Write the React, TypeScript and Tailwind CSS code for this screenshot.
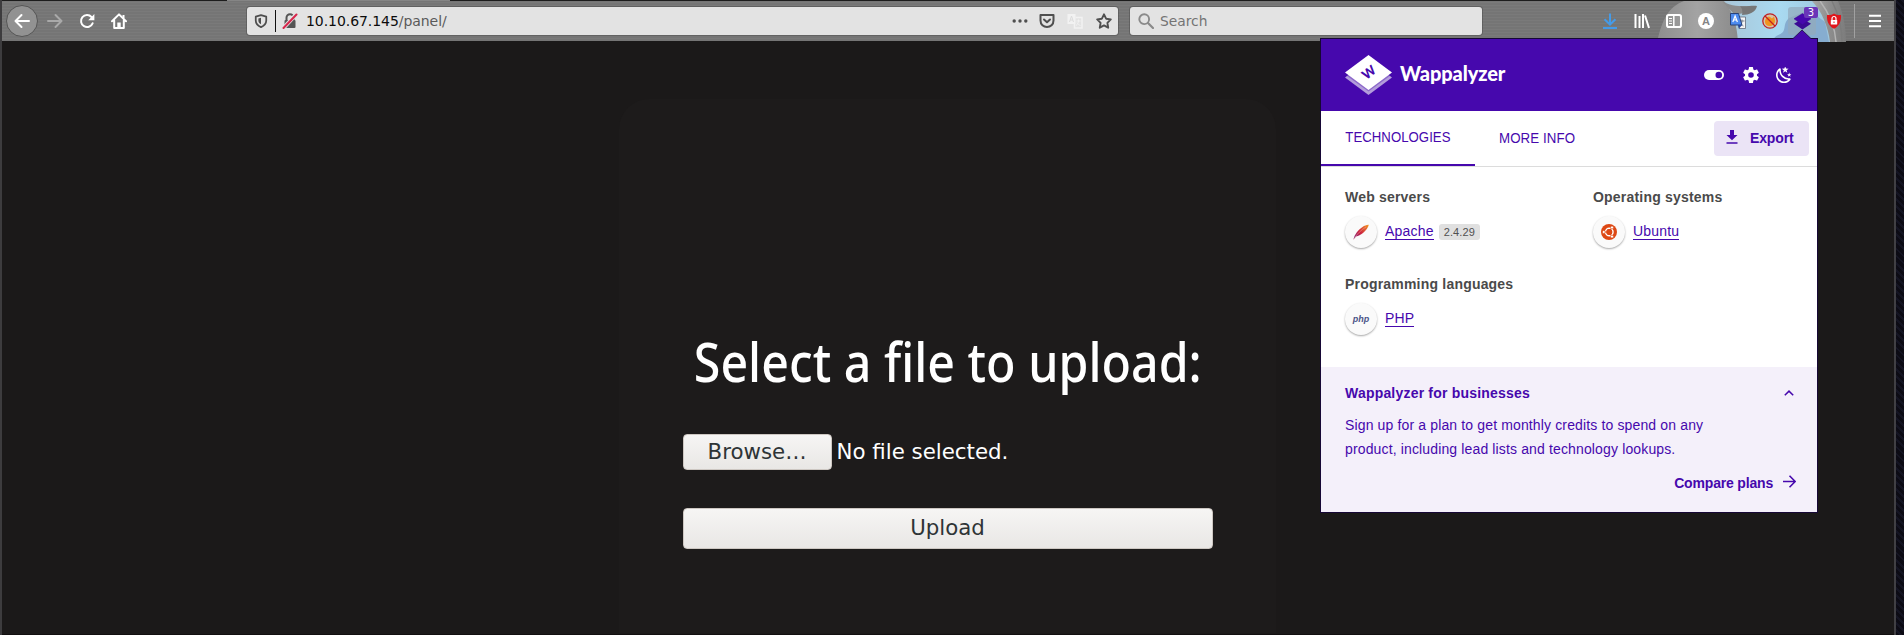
import type { ReactNode } from "react";

type IconProps = { children: ReactNode; className?: string; box?: string };

function Icon({ children, className = "size-4", box = "0 0 16 16" }: IconProps) {
  return (
    <svg viewBox={box} className={`shrink-0 ${className}`} fill="none">
      {children}
    </svg>
  );
}

function Slot({ children, className }: { children: ReactNode; className: string }) {
  return <div className={`flex h-full shrink-0 items-center justify-center ${className}`}>{children}</div>;
}

function NavButtons() {
  return (
    <div className="flex h-full w-[245px] shrink-0 items-center pl-[4px]">
      <div className="flex size-8 items-center justify-center rounded-full border border-[#555] bg-[#929292]">
        <Icon className="size-4">
          <path d="M15 8H2M7.5 2 1.5 8l6 6" stroke="#fff" strokeWidth="2" strokeLinecap="round" strokeLinejoin="round" />
        </Icon>
      </div>
      <Slot className="w-[33px]">
        <Icon>
          <path d="M1 8h13M8.5 2l6 6-6 6" stroke="#a9a9a9" strokeWidth="2" strokeLinecap="round" strokeLinejoin="round" />
        </Icon>
      </Slot>
      <Slot className="w-[32px]">
        <Icon>
          <path d="M13.6 10.3A6 6 0 1 1 12.5 4" stroke="#fff" strokeWidth="2" strokeLinecap="round" />
          <path d="M15.4 1v6.2H9.2z" fill="#fff" />
        </Icon>
      </Slot>
      <Slot className="w-[31px]">
        <Icon>
          <path d="M1 8.2 8 1.4l7 6.8M3.2 7.5V15h9.6V7.5" stroke="#fff" strokeWidth="2" strokeLinecap="round" strokeLinejoin="round" />
          <path d="M6.3 15V9.6h3.4V15zM11.5 2h2v3.2h-2z" fill="#fff" />
        </Icon>
      </Slot>
    </div>
  );
}

function AddressBar() {
  return (
    <div className="flex h-[28px] w-[871px] shrink-0 items-center rounded-[3px] bg-[#e3e3e3] shadow-[0_0_0_1px_rgba(70,70,70,0.45)]">
      <Slot className="w-[28px]">
        <Icon className="size-[14px]">
          <path d="M8 1.2 14 3v4.5c0 3.8-2.4 6-6 7.5-3.6-1.500-6-3.700-6-7.500V3z" stroke="#4e4e4e" strokeWidth="2" strokeLinejoin="round" />
          <path d="M8 4.2v7.6c-2-1-3-2.300-3-4.300V5z" fill="#4e4e4e" />
        </Icon>
      </Slot>
      <div className="h-[22px] w-px bg-[#111]" />
      <Slot className="w-[28px]">
        <Icon className="size-[16px]">
          <path d="M4.500 8V4.800a3.500 3.500 0 0 1 7 0V8" stroke="#555" strokeWidth="2" />
          <rect x="2.500" y="7" width="11" height="8" rx="1" fill="#555" />
          <path d="M1 15.500 14.500 1" stroke="#e3e3e3" strokeWidth="4" />
          <path d="M1.500 15 14.500 1.500" stroke="#d7264c" strokeWidth="2" strokeLinecap="round" />
        </Icon>
      </Slot>
      <div className="grow pl-[2px] font-['DejaVu_Sans',sans-serif] text-[14px] leading-none tracking-[-0.06px] text-[#5a5a5a]">
        <span className="text-[#0c0c0c]">10.10.67.145</span>/panel/
      </div>
      <Slot className="w-[27px]">
        <Icon>
          <circle cx="2.200" cy="8" r="1.700" fill="#4f4f4f" />
          <circle cx="8" cy="8" r="1.700" fill="#4f4f4f" />
          <circle cx="13.800" cy="8" r="1.700" fill="#4f4f4f" />
        </Icon>
      </Slot>
      <Slot className="w-[28px]">
        <Icon>
          <path d="M1.500 2h13v5.500c0 4-3 6.500-6.500 6.500s-6.500-2.500-6.500-6.500z" stroke="#4f4f4f" strokeWidth="2" strokeLinejoin="round" />
          <path d="M5 6.500 8 9.300l3-2.800" stroke="#4f4f4f" strokeWidth="2" strokeLinecap="round" strokeLinejoin="round" />
        </Icon>
      </Slot>
      <Slot className="w-[28px]">
        <Icon>
          <path d="M0.500 1h8v10h-8z" fill="#f2f2f2" />
          <path d="M8.500 4.500H15V15H7.500v-4" stroke="#f2f2f2" strokeWidth="1.500" />
          <path d="M9.500 8h4M11.500 6.500V8c0 2-1 3.500-2.500 4.500M10 9.500c.500 1.500 2 2.500 3.500 3" stroke="#f2f2f2" />
          <path d="m2.500 9 2-6 2 6M3.200 7h2.600" stroke="#dcdcdc" />
        </Icon>
      </Slot>
      <Slot className="w-[29px]">
        <Icon>
          <path d="m8 1.300 2.100 4.400 4.700.700-3.400 3.400.800 4.900L8 12.400l-4.200 2.300.800-4.900L1.200 6.400l4.700-.700z" stroke="#4f4f4f" strokeWidth="1.900" strokeLinejoin="round" />
        </Icon>
      </Slot>
    </div>
  );
}

function SearchBar() {
  return (
    <div className="ml-[12px] flex h-[28px] w-[352px] shrink-0 items-center gap-[6px] rounded-[3px] bg-[#e3e3e3] pl-[8px] shadow-[0_0_0_1px_rgba(70,70,70,0.45)]">
      <Icon>
        <circle cx="6.200" cy="6.200" r="4.900" stroke="#8a8a8a" strokeWidth="1.900" />
        <path d="m10 10 5 5" stroke="#8a8a8a" strokeWidth="2.200" strokeLinecap="round" />
      </Icon>
      <span className="pt-px font-['DejaVu_Sans',sans-serif] text-[13.8px] leading-none text-[#747474]">Search</span>
    </div>
  );
}

/* Artwork of the browser theme that shows behind the toolbar buttons. */
function ThemeArt() {
  return (
    <svg viewBox="0 0 210 42" className="absolute top-0 left-[1652px] h-[42px] w-[210px]">
      <defs>
        <linearGradient id="sky" x1="0" x2="1">
          <stop offset="0" stopColor="#a9c6d8" />
          <stop offset="0.5" stopColor="#a9daf1" />
          <stop offset="1" stopColor="#9cc4da" />
        </linearGradient>
        <linearGradient id="hairLeft" x1="0" x2="1">
          <stop offset="0" stopColor="#8e8e8e" />
          <stop offset="0.5" stopColor="#a3a3a3" />
          <stop offset="1" stopColor="#8a8a8a" />
        </linearGradient>
        <linearGradient id="hairRight" x1="0" x2="1">
          <stop offset="0" stopColor="#a8a8a8" />
          <stop offset="0.5" stopColor="#8e8e8e" />
          <stop offset="1" stopColor="#7c7c7c" />
        </linearGradient>
      </defs>
      <path d="M70 1h112v41H70z" fill="url(#sky)" />
      <path d="M3 42C8 20 14 7 30 1h40c10 12 13 26 14 41z" fill="url(#hairLeft)" />
      <path d="M68 1c8 5 20 6 30 5-2 5-10 9-18 8z" fill="#8c8c8c" />
      <path d="M86 6c6 1 13-1 17 0-1 6-8 9-15 9 1-4 0-7-2-9z" fill="#777" />
      <path d="M118 42c3-8 7-6 11-10 3-5 0-8 6-14l20-8 16 12 4 20z" fill="#86add0" />
      <path d="M158 1h26c6 14 8 28 8 41h-16c-2-16-8-30-18-41z" fill="url(#hairRight)" />
      <path d="M166 1c9 12 15 26 16 41" stroke="#b4b4b4" strokeWidth="1.500" fill="none" />
      <path d="M178 1c6 12 10 26 10 41" stroke="#7c7c7c" strokeWidth="1.500" fill="none" />
    </svg>
  );
}

function ToolbarIcons() {
  return (
    <div className="relative ml-[112px] flex h-full items-center">
      <Slot className="w-[32px]">
        <Icon>
          <path d="M8 0.500V11M2.500 6.200 8 11.500l5.500-5.300M1 15h14" stroke="#459be8" strokeWidth="2" />
        </Icon>
      </Slot>
      <Slot className="w-[32px]">
        <Icon>
          <path d="M1.500 1v14M5.500 3v12M9 1v14M11 2.500 15 15" stroke="#fff" strokeWidth="2" />
        </Icon>
      </Slot>
      <Slot className="w-[32px]">
        <Icon>
          <rect x="1" y="2" width="14" height="12" rx="1.800" stroke="#fff" strokeWidth="2" />
          <path d="M7.800 2v12" stroke="#fff" strokeWidth="1.500" />
          <path d="M3 5.500h3M3 8h3M3 10.500h3" stroke="#fff" />
        </Icon>
      </Slot>
      <Slot className="w-[32px]">
        <div className="flex size-4 items-center justify-center rounded-full bg-white font-['Liberation_Sans',sans-serif] text-[11px] leading-none font-bold text-[#858585]">
          A
        </div>
      </Slot>
      <Slot className="w-[32px]">
        <Icon>
          <path d="M7 4h8.500v11.500H9z" fill="#f4f4f4" stroke="#626b7a" strokeWidth="0.800" />
          <path d="M9.500 8h5M12 6.500V8c0 2-1 4-3 5M10 9.500c.500 2 2 3 3.500 3.500" stroke="#6e7785" strokeWidth="0.900" />
          <path d="M0.500 0.500h8L12 12H0.500z" fill="#4c8bf0" stroke="#1f3a72" strokeWidth="0.900" />
          <path d="m2.800 9 2.300-6 2.300 6M3.600 7h3" stroke="#fff" strokeWidth="1.200" />
          <path d="M8 12h4l-3 3.500z" fill="#2349a0" />
        </Icon>
      </Slot>
      <Slot className="w-[32px]">
        <Icon>
          <circle cx="8" cy="8" r="6.500" fill="#d7c2a5" />
          <path d="M3 9c0-3 2-6 5-5l2 1.500 2-2 .800 3c.800 4-1.800 6.500-5 6.500S3 11 3 9z" fill="#f0941f" />
          <circle cx="8" cy="8" r="7.200" stroke="#c41f1f" strokeWidth="1.300" />
          <path d="m3 3 10 10" stroke="#c41f1f" strokeWidth="1.300" />
        </Icon>
      </Slot>
      <Slot className="w-[32px]">
        <div className="relative flex size-7 items-center justify-center rounded-[3px] bg-[#93a9ba]/70">
          <Icon className="size-[17px]">
            <path d="m8 5.500 8 4.700-8 5.300-8-5.300z" fill="#3a0a94" />
            <path d="m8 0.500 8 5-8 5.500-8-5.500z" fill="#4608ad" stroke="#3a0a94" strokeWidth="0.500" />
          </Icon>
          <div className="absolute top-0 -right-[2px] flex h-[11px] w-[14px] items-center justify-center rounded-[2px] bg-[#6a35b8] font-['DejaVu_Sans',sans-serif] text-[10px] leading-none text-white">
            3
          </div>
        </div>
      </Slot>
      <Slot className="w-[32px]">
        <Icon>
          <path d="M8 0.500c2 1.300 4.500 1.800 7 1.500.400 6-1.500 11-7 13.800C2.500 13 .600 8 1 2c2.500.300 5-.200 7-1.500z" fill="#e0161c" />
          <rect x="4.800" y="7" width="6.400" height="4.600" rx="0.500" fill="#fff" />
          <path d="M6 7V5.500a2 2 0 0 1 4 0V7" stroke="#fff" strokeWidth="1.200" />
          <path d="M8 8.500v1.500" stroke="#e0161c" />
        </Icon>
      </Slot>
      <div className="ml-[4px] h-[34px] w-px bg-[#a0a0a0]" />
      <Slot className="ml-[4px] w-[32px]">
        <Icon className="size-4">
          <path d="M2 2.800h12M2 8h12M2 13.200h12" stroke="#fff" strokeWidth="2" />
        </Icon>
      </Slot>
    </div>
  );
}

function Toolbar() {
  return (
    <div className="relative h-[41px] w-full bg-[#757575] bg-[repeating-linear-gradient(0deg,transparent_0_2px,rgba(255,255,255,0.04)_2px_3px)]">
      <ThemeArt />
      <div className="absolute inset-x-0 top-0 flex h-px">
        <div className="w-[225px] bg-[#1c1c1c]" />
        <div className="w-[223px] bg-[#858585]" />
        <div className="grow bg-[#1c1c1c]" />
      </div>
      <div className="relative flex h-full items-center pt-px">
        <NavButtons />
        <AddressBar />
        <SearchBar />
        <ToolbarIcons />
      </div>
    </div>
  );
}

function UploadPage() {
  return (
    <div className="flex grow justify-center bg-[#1b1919] pt-[58px] pr-[2px] pb-px">
      <div className="flex w-[657px] flex-col rounded-t-[30px] bg-[#1d1b1b] px-[64px] pt-[215px]">
        <h1 className="flex h-[94px] items-center justify-center whitespace-nowrap pl-[2px] font-['Noto_Sans',sans-serif] text-[54px] leading-none font-medium text-white">
          <span className="inline-block origin-center scale-x-[0.895]">Select a file to upload:</span>
        </h1>
        <div className="mt-[26px] flex h-[36px] items-center gap-[5px] font-['DejaVu_Sans',sans-serif] text-[21.33px]">
          <button className="h-full w-[149px] rounded-[4px] border border-[#cdc7c2] bg-linear-to-b from-[#f6f5f4] to-[#e9e7e5] leading-none text-[#2e3436]">
            Browse…
          </button>
          <span className="leading-none text-white">No file selected.</span>
        </div>
        <button className="mt-[38px] h-[41px] w-[530px] rounded-[4px] border border-[#cdc7c2] bg-linear-to-b from-[#f6f5f4] to-[#e9e7e5] pb-[2px] font-['DejaVu_Sans',sans-serif] text-[21.33px] leading-none text-[#2e3436]">
          Upload
        </button>
      </div>
    </div>
  );
}

function TechIcon({ children }: { children: ReactNode }) {
  return (
    <div className="flex size-8 items-center justify-center rounded-full bg-[#fafafa] shadow-[0_1px_2px_rgba(0,0,0,0.35)]">
      {children}
    </div>
  );
}

function Tech({ title, name, version, icon }: { title: string; name: string; version?: string; icon: ReactNode }) {
  return (
    <div className="h-[87px]">
      <div className="h-[20px] text-[14px] leading-[20px] font-bold tracking-[0.2px] whitespace-nowrap text-[#4a4a4a]">{title}</div>
      <div className="mt-[9px] flex items-center">
        <TechIcon>{icon}</TechIcon>
        <span className="mb-[2px] ml-[8px] border-b border-[#4608ad] text-[14px] leading-[16px] tracking-[0.2px] text-[#4608ad]">{name}</span>
        {version && (
          <span className="ml-[5px] flex h-[16px] items-center rounded-[3px] bg-[#e0e0e0] px-[5px] text-[11px] leading-none tracking-[0.1px] text-[#505050]">
            {version}
          </span>
        )}
      </div>
    </div>
  );
}

function WappalyzerPopup() {
  return (
    <div className="absolute top-[38px] left-[1320px] w-[498px] border border-[#160735] bg-white font-['Liberation_Sans',Arial,sans-serif]">
      <svg viewBox="0 0 20 10" className="absolute -top-[10px] left-[471px] h-[11px] w-[20px]">
        <path d="M0 10 10 0.500 20 10z" fill="#4608ad" stroke="#160735" strokeWidth="0.700" />
      </svg>
      <header className="relative flex h-[72px] items-center bg-[#4608ad] pl-[24px]">
        <div className="relative flex h-[40px] w-[47px] justify-center">
          <svg viewBox="0 0 47 40" className="absolute inset-0 h-[40px] w-[47px]">
            <path d="M0 22.500 23.500 5 47 22.500 23.500 40z" fill="#b39ddb" />
            <path d="M0 19.500 23.500 3 47 19.500 23.500 36.500z" fill="#4608ad" opacity="0.350" />
            <path d="M0 17.500 23.500 0 47 17.500 23.500 35z" fill="#fff" />
          </svg>
          <span className="relative flex h-[35px] -rotate-[38deg] items-center font-['Lato',sans-serif] text-[13px] leading-none font-black text-[#4608ad]">
            W
          </span>
        </div>
        <span className="ml-[8px] pb-[5px] font-['Lato',sans-serif] text-[20px] leading-none font-black tracking-[-0.1px] text-white">Wappalyzer</span>
        <div className="ml-auto flex items-center pr-[25px]">
          <svg viewBox="0 0 20 10" className="h-[10px] w-[20px]">
            <rect width="20" height="10" rx="5" fill="#fff" />
            <circle cx="14.800" cy="5" r="3.300" fill="#4608ad" />
          </svg>
          <svg viewBox="2 2 20 20" className="ml-[19px] size-[16px]">
            <path fill="#fff" d="M12 15.500A3.500 3.500 0 0 1 8.500 12 3.500 3.500 0 0 1 12 8.500a3.500 3.500 0 0 1 3.500 3.500 3.500 3.500 0 0 1-3.500 3.500m7.430-2.530c.040-.320.070-.640.070-.970s-.030-.660-.070-1l2.110-1.630c.190-.150.240-.420.120-.640l-2-3.460c-.120-.220-.390-.310-.610-.220l-2.490 1c-.520-.390-1.060-.730-1.690-.980l-.370-2.650A.506.506 0 0 0 14 2h-4c-.250 0-.460.180-.500.420l-.370 2.650c-.630.250-1.170.590-1.690.980l-2.490-1c-.220-.090-.490 0-.610.220l-2 3.460c-.130.220-.070.490.120.640L4.570 11c-.040.340-.070.670-.070 1s.030.650.070.970l-2.110 1.660c-.190.150-.250.420-.120.640l2 3.460c.120.220.390.300.610.220l2.490-1.010c.520.400 1.060.740 1.690.990l.370 2.650c.040.240.250.420.500.420h4c.250 0 .460-.180.500-.420l.370-2.650c.630-.260 1.170-.590 1.690-.990l2.490 1.010c.220.080.490 0 .610-.220l2-3.460c.120-.220.070-.490-.120-.640z" />
          </svg>
          <svg viewBox="2 2 20 20" className="ml-[17px] size-[16px]">
            <path fill="#fff" d="m17.750 4.090-2.530 1.940.910 3.060-2.630-1.810-2.630 1.810.910-3.060-2.530-1.940L12.440 4l1.060-3 1.060 3zm3.500 6.910-1.640 1.250.590 1.980-1.700-1.170-1.700 1.170.590-1.980L15.750 11l2.060-.050L18.500 9l.690 1.950zm-2.280 4.950c.830-.080 1.720 1.100 1.190 1.850-.320.450-.660.870-1.080 1.270C15.170 23 8.840 23 4.940 19.070c-3.910-3.900-3.910-10.240 0-14.140.400-.400.820-.760 1.270-1.080.750-.530 1.930.360 1.850 1.190-.270 2.860.690 5.830 2.890 8.020a9.960 9.960 0 0 0 8.020 2.890m-1.640 2.020a12.080 12.080 0 0 1-7.800-3.470c-2.170-2.190-3.330-5-3.490-7.820-2.810 3.140-2.700 7.960.310 10.980 3.020 3.010 7.840 3.120 10.980.310" />
          </svg>
        </div>
      </header>

      <nav className="flex h-[56px] border-b border-[#dcdcdc] text-[14px] leading-none text-[#4608ad]">
        <div className="flex w-[154px] items-center justify-center border-b-2 border-[#4608ad] pb-[2px]">
          <span className="inline-block scale-x-[0.94] tracking-[0.05px]">TECHNOLOGIES</span>
        </div>
        <div className="flex w-[124px] items-center justify-center pb-px">
          <span className="inline-block scale-x-[0.95] tracking-[0.1px]">MORE INFO</span>
        </div>
        <button className="mt-[10px] mr-[8px] ml-auto flex h-[35px] w-[95px] items-center rounded-[4px] bg-[#ebe4f6] pb-[2px] pl-[12px] text-[14px] font-bold">
          <svg viewBox="0 0 12 14" className="h-[14px] w-[12px] -translate-y-px">
            <path d="M4 0h4v5h3.500L6 10.300.500 5H4zM.500 12.300h11v1.500H.500z" fill="#4608ad" />
          </svg>
          <span className="ml-[12px] tracking-[-0.15px]">Export</span>
        </button>
      </nav>

      <section className="grid h-[200px] grid-cols-[248px_248px] content-start overflow-hidden pt-[20px] pl-[24px]">
        <Tech
          title="Web servers"
          name="Apache"
          version="2.4.29"
          icon={
            <svg viewBox="0 0 16 16" className="size-4">
              <defs>
                <linearGradient id="feather" x1="0" y1="1" x2="1" y2="0">
                  <stop offset="0" stopColor="#6d2a8c" />
                  <stop offset="0.450" stopColor="#cb2140" />
                  <stop offset="1" stopColor="#f59a22" />
                </linearGradient>
              </defs>
              <path d="M0.500 15.500C1.500 10.500 5 6 9.500 3 11.500 1.600 14 .600 15.800.800 15.300 3.500 13 6.500 10 9c-2.500 2-4.500 3-7 3.500z" fill="url(#feather)" />
              <path d="M0.500 15.500C4 10 8 6 13 3" stroke="#f4a9a0" strokeWidth="0.500" fill="none" />
            </svg>
          }
        />
        <Tech
          title="Operating systems"
          name="Ubuntu"
          icon={
            <svg viewBox="0 0 16 16" className="size-4">
              <circle cx="8" cy="8" r="8" fill="#dd4814" />
              <circle cx="8.300" cy="8" r="3.700" fill="none" stroke="#fff" strokeWidth="1.500" />
              <path d="M8 8H2M8 8l3.500-6M8 8l3.500 6" stroke="#dd4814" strokeWidth="0.900" />
              <circle cx="8.300" cy="8" r="2.900" fill="#dd4814" />
              <g fill="#fff" stroke="#dd4814" strokeWidth="0.600">
                <circle cx="2.800" cy="8" r="1.500" />
                <circle cx="11" cy="3.400" r="1.500" />
                <circle cx="11" cy="12.600" r="1.500" />
              </g>
            </svg>
          }
        />
        <Tech
          title="Programming languages"
          name="PHP"
          icon={<span className="text-[9px] leading-none font-bold text-[#4a5588] italic">php</span>}
        />
      </section>

      <section className="h-[145px] bg-[#f4f0fa] pt-[16px] pr-[21px] pl-[24px] text-[14px] tracking-[0.14px] text-[#4608ad]">
        <div className="flex h-[20px] items-center justify-between font-bold tracking-[0.2px]">
          Wappalyzer for businesses
          <svg viewBox="0 0 10 6" className="mr-[2px] h-[6px] w-[10px]">
            <path d="m.800 5.300 4.200-4.200 4.200 4.200" stroke="#4608ad" strokeWidth="1.500" fill="none" />
          </svg>
        </div>
        <p className="mt-[10px] w-[380px] leading-[24px]">
          Sign up for a plan to get monthly credits to spend on any product, including lead lists and technology lookups.
        </p>
        <div className="mt-[12px] flex items-center justify-end gap-[10px] leading-[20px] font-bold tracking-[-0.18px]">
          Compare plans
          <svg viewBox="0 0 13 13" className="h-[13px] w-[13px] -translate-y-[2px]">
            <path d="M0 6.500h12M6.500.700l5.700 5.800-5.700 5.800" stroke="#4608ad" strokeWidth="1.600" fill="none" />
          </svg>
        </div>
      </section>
    </div>
  );
}

export default function App() {
  return (
    <div className="relative flex h-[635px] w-[1904px] overflow-hidden bg-[#100f1a] bg-[repeating-linear-gradient(45deg,#0c0b14_0_3px,#141422_3px_5px)]">
      <div className="w-[2px] shrink-0 bg-[#3d3c3e]" />
      <div className="flex w-[1892px] shrink-0 flex-col border-b border-[#120f10]">
        <Toolbar />
        <UploadPage />
      </div>
      <div className="w-[2px] shrink-0 bg-[#414044]" />
      <WappalyzerPopup />
    </div>
  );
}
